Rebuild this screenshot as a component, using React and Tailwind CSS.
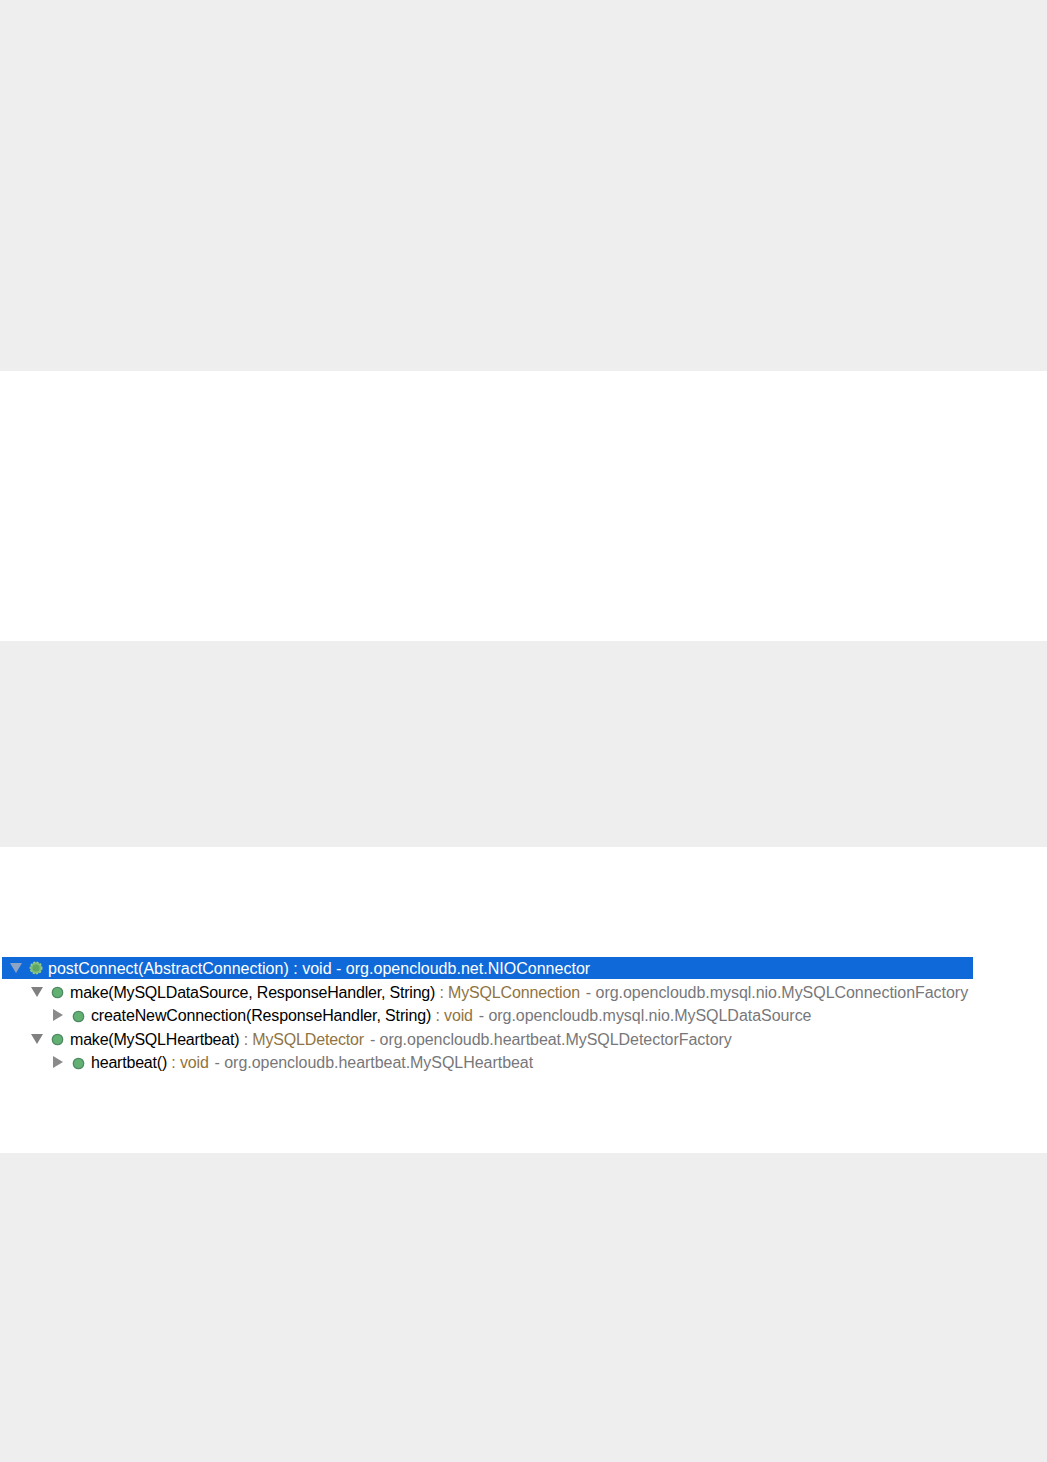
const MUTED = 'ml-[1.5px] text-[#77777a] tracking-[-0.04px]';
const TYPE = 'text-[#8f7443] tracking-[-0.16px]';

function Arrow({ open, light }) {
  return (
    <svg width="14" height="14" viewBox="0 0 14 14" className="shrink-0">
      {open ? (
        <path d="M1 2 H13 L7 12 Z" fill={light ? '#8fa3c4' : '#808080'} />
      ) : (
        <path d="M2 1 L12 7 L2 13 Z" fill="#8a8a8a" />
      )}
    </svg>
  );
}

function MethodDot({ gear }) {
  if (gear) {
    return (
      <svg width="14" height="14" viewBox="0 0 14 14" className="shrink-0">
        <circle cx="7" cy="7" r="5.8" fill="#7fbf7a" strokeDasharray="2 1.4" stroke="#94c98f" strokeWidth="1.4" />
        <circle cx="7" cy="7" r="3.6" fill="#5fa765" />
      </svg>
    );
  }
  return (
    <svg width="13" height="13" viewBox="0 0 13 13" className="shrink-0 translate-y-[1px]">
      <circle cx="6.5" cy="6.5" r="5.2" fill="#62b173" stroke="#4f8a63" strokeWidth="1.3" />
    </svg>
  );
}

function Row({ indent, open, name, type, pkg, spacing = 'tracking-[-0.2px]' }) {
  return (
    <div className={`flex items-center h-[23.5px] ${indent}`}>
      <Arrow open={open} />
      <div className="ml-[7px] flex">
        <MethodDot />
      </div>
      <div className={`ml-[6px] pt-[2px] whitespace-nowrap text-black ${spacing}`}>
        {name}
        <span className={TYPE}> : {type}</span>
        <span className={MUTED}> - {pkg}</span>
      </div>
    </div>
  );
}

export default function App() {
  return (
    <div className="w-[1047px] h-[1462px] flex flex-col bg-white font-['Liberation_Sans',sans-serif] text-[16px]">
      <div className="h-[371px] bg-[#eeeeee]"></div>
      <div className="h-[270px]"></div>
      <div className="h-[206px] bg-[#eeeeee]"></div>
      <div className="h-[306px] pt-[110px] pl-[2px]">
        <div className="flex items-center w-[971px] h-[22px] pl-[7px] bg-[#1069d8] text-white mb-[1px]">
          <Arrow open light />
          <div className="ml-[6px] flex">
            <MethodDot gear />
          </div>
          <div className="ml-[5px] pt-[2px] whitespace-nowrap tracking-[0.02px]">
            postConnect(AbstractConnection) : void - org.opencloudb.net.NIOConnector
          </div>
        </div>
        <Row indent="pl-[28px]" open name="make(MySQLDataSource, ResponseHandler, String)" type="MySQLConnection" pkg="org.opencloudb.mysql.nio.MySQLConnectionFactory" />
        <Row indent="pl-[49px]" spacing="tracking-[-0.13px]" name="createNewConnection(ResponseHandler, String)" type="void" pkg="org.opencloudb.mysql.nio.MySQLDataSource" />
        <Row indent="pl-[28px]" open name="make(MySQLHeartbeat)" type="MySQLDetector" pkg="org.opencloudb.heartbeat.MySQLDetectorFactory" />
        <Row indent="pl-[49px]" name="heartbeat()" type="void" pkg="org.opencloudb.heartbeat.MySQLHeartbeat" />
      </div>
      <div className="flex-1 bg-[#eeeeee]"></div>
    </div>
  );
}
